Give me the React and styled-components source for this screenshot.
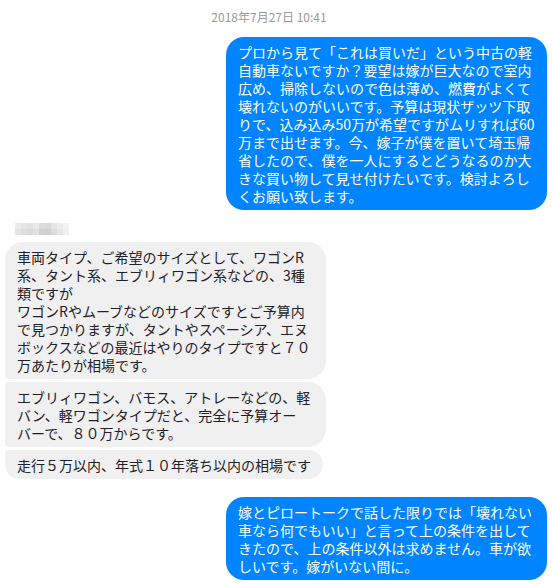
import React from "react";
import styled, { createGlobalStyle } from "styled-components";

const GlobalStyle = createGlobalStyle`
  body {
    margin: 0;
    background: #fff;
    font-family: "Noto Sans CJK JP", "Noto Sans", sans-serif;
  }
`;

const Chat = styled.div`
  display: flex;
  flex-direction: column;
  padding: 9px 5px 0 5px;
`;

const Stamp = styled.div`
  align-self: center;
  margin-right: 14px;
  margin-bottom: 12px;
  font-size: 12px;
  line-height: 16px;
  color: #999;
`;

const Group = styled.div`
  display: flex;
  flex-direction: column;
  align-items: ${(props) => (props.mine ? "flex-end" : "flex-start")};
  gap: 3px;
  margin-bottom: ${(props) => props.gap || 0}px;
`;

const Bubble = styled.div`
  box-sizing: border-box;
  width: ${(props) => (props.width ? props.width + "px" : "auto")};
  padding: 6px 12px 5px 12px;
  font-size: 14px;
  line-height: 18px;
  white-space: nowrap;
  background: ${(props) => (props.mine ? "#0084ff" : "#f1f0f0")};
  color: ${(props) => (props.mine ? "#fff" : "#1d2129")};
  border-radius: ${(props) => props.radius || "18px"};
`;

const Sender = styled.svg`
  display: block;
  margin: 13px 0 7px 10px;
`;

const mosaic = [
  ["#ececec", "#e6e6e6", "#e2e2e2", "#ebebeb", "#dcdcdc", "#d9d9d9", "#e4e4e4", "#ececec", "#f3f3f3"],
  ["#e4e4e4", "#dedede", "#dadada", "#e0e0e0", "#d2d2d2", "#cfcfcf", "#dbdbdb", "#e6e6e6", "#f0f0f0"],
];

const BlurredName = () => (
  <Sender width="54" height="12" viewBox="0 0 54 12">
    {mosaic.map((row, r) =>
      row.map((c, i) => <rect key={r + "-" + i} x={i * 6} y={r * 6} width="6" height="6" fill={c} />)
    )}
  </Sender>
);

const Lines = ({ lines }) =>
  lines.map((l, i) => (
    <React.Fragment key={i}>
      {l}
      {i < lines.length - 1 && <br />}
    </React.Fragment>
  ));

const first = [
  "プロから見て「これは買いだ」という中古の軽",
  "自動車ないですか？要望は嫁が巨大なので室内",
  "広め、掃除しないので色は薄め、燃費がよくて",
  "壊れないのがいいです。予算は現状ザッツ下取",
  "りで、込み込み50万が希望ですがムリすれば60",
  "万まで出せます。今、嫁子が僕を置いて埼玉帰",
  "省したので、僕を一人にするとどうなるのか大",
  "きな買い物して見せ付けたいです。検討よろし",
  "くお願い致します。",
];

const replies = [
  {
    radius: "18px 18px 18px 4px",
    width: 321,
    lines: [
      "車両タイプ、ご希望のサイズとして、ワゴンR",
      "系、タント系、エブリィワゴン系などの、3種",
      "類ですが",
      "ワゴンRやムーブなどのサイズですとご予算内",
      "で見つかりますが、タントやスペーシア、エヌ",
      "ボックスなどの最近はやりのタイプですと７０",
      "万あたりが相場です。",
    ],
  },
  {
    radius: "4px 18px 18px 4px",
    width: 321,
    lines: [
      "エブリィワゴン、バモス、アトレーなどの、軽",
      "バン、軽ワゴンタイプだと、完全に予算オー",
      "バーで、８０万からです。",
    ],
  },
  {
    radius: "4px 18px 18px 18px",
    lines: ["走行５万以内、年式１０年落ち以内の相場です"],
  },
];

const last = [
  "嫁とピロートークで話した限りでは「壊れない",
  "車なら何でもいい」と言って上の条件を出して",
  "きたので、上の条件以外は求めません。車が欲",
  "しいです。嫁がいない間に。",
];

export default function App() {
  return (
    <>
      <GlobalStyle />
      <Chat>
        <Stamp>2018年7月27日 10:41</Stamp>
        <Group mine>
          <Bubble mine width={321}>
            <Lines lines={first} />
          </Bubble>
        </Group>
        <BlurredName />
        <Group gap={18}>
          {replies.map((m, i) => (
            <Bubble key={i} width={m.width} radius={m.radius}>
              <Lines lines={m.lines} />
            </Bubble>
          ))}
        </Group>
        <Group mine>
          <Bubble mine width={321}>
            <Lines lines={last} />
          </Bubble>
        </Group>
      </Chat>
    </>
  );
}
